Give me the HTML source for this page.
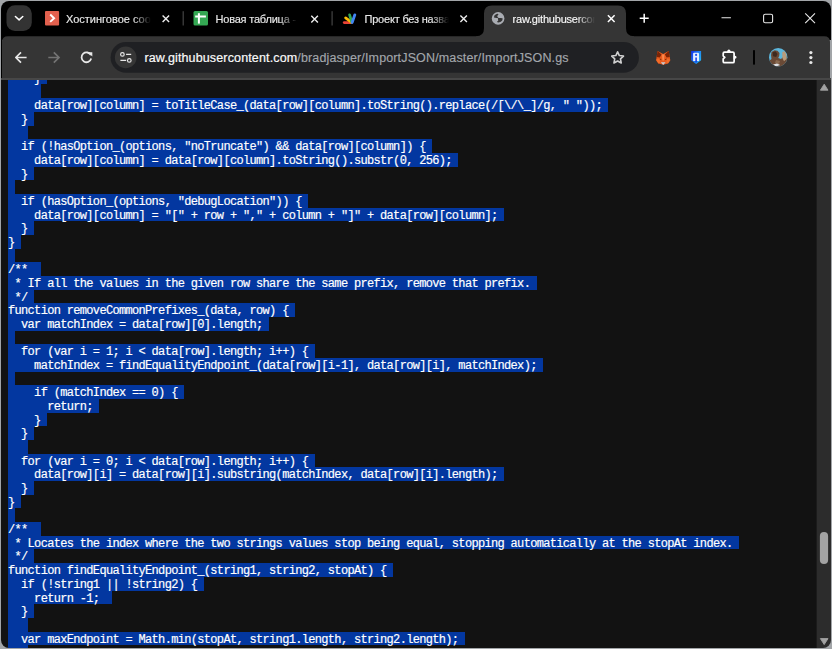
<!DOCTYPE html>
<html><head><meta charset="utf-8">
<style>
html,body{margin:0;padding:0;width:832px;height:649px;overflow:hidden;background:#a2a5a8;}
#win{position:absolute;left:0;top:0;width:832px;height:649px;clip-path:inset(1px 1px 1px 1px round 8px);overflow:hidden;}
.abs{position:absolute;left:0;top:0;}
#content{position:absolute;left:0;top:80px;width:816.6px;height:569px;background:#121212;overflow:hidden;}
#code{position:absolute;left:0;top:-80px;width:832px;height:649px;}
.hl{position:absolute;left:8.0px;height:13.677px;background:#0337a0;}
.ln{position:absolute;left:8.0px;height:13.677px;line-height:13.677px;white-space:pre;font-family:"Liberation Mono",monospace;font-size:12.0px;letter-spacing:-0.6741px;color:#ffffff;-webkit-text-stroke:0.18px #fff;}
.tt{position:absolute;top:11px;height:16px;line-height:16px;font-family:"Liberation Sans",sans-serif;font-size:11px;letter-spacing:-0.2px;white-space:nowrap;overflow:hidden;color:#e8e8e8;-webkit-text-stroke:0.15px #e8e8e8;-webkit-mask-image:linear-gradient(to right,#000 calc(100% - 18px),transparent 100%);}
</style></head><body>
<div id="win">
  <svg class="abs" width="832" height="649">
    <rect x="0" y="0" width="832" height="40" fill="#000"/>
    <rect x="0" y="36" width="2.5" height="44" fill="#000"/>
    <!-- toolbar -->
    <path d="M2 42 Q2 36.2 8 36.2 L824 36.2 Q830 36.2 830 42 L830 78 L2 78 Z" fill="#353535"/>
    <rect x="0" y="78" width="832" height="2" fill="#474747"/>
    <!-- active tab -->
    <path d="M476 36.2 Q484 36.2 484 28.2 L484 13.5 Q484 5.5 492 5.5 L618 5.5 Q626 5.5 626 13.5 L626 28.2 Q626 36.2 634 36.2 L634 40 L476 40 Z" fill="#353535"/>
    <!-- dropdown button -->
    <rect x="6.5" y="5.2" width="25.3" height="25.7" rx="8.5" fill="#333333"/>
    <!-- omnibox -->
    <rect x="110.6" y="42.1" width="528.3" height="30.7" rx="15.35" fill="#1f2023"/>
    <circle cx="125.7" cy="57.4" r="10.8" fill="#363636"/>
  </svg>

  <div id="content"><div id="code">
<div class="hl" style="top:70.800px;width:39.162px"></div>
<div class="hl" style="top:84.477px;width:32.635px"></div>
<div class="hl" style="top:98.154px;width:600.484px"></div>
<div class="hl" style="top:111.831px;width:26.108px"></div>
<div class="hl" style="top:125.508px;width:19.581px"></div>
<div class="hl" style="top:139.185px;width:424.255px"></div>
<div class="hl" style="top:152.862px;width:450.363px"></div>
<div class="hl" style="top:166.539px;width:26.108px"></div>
<div class="hl" style="top:180.216px;width:6.527px"></div>
<div class="hl" style="top:193.893px;width:300.242px"></div>
<div class="hl" style="top:207.570px;width:496.052px"></div>
<div class="hl" style="top:221.247px;width:26.108px"></div>
<div class="hl" style="top:234.924px;width:13.054px"></div>
<div class="hl" style="top:248.601px;width:6.527px"></div>
<div class="hl" style="top:262.278px;width:32.635px"></div>
<div class="hl" style="top:275.955px;width:528.687px"></div>
<div class="hl" style="top:289.632px;width:26.108px"></div>
<div class="hl" style="top:303.309px;width:287.188px"></div>
<div class="hl" style="top:316.986px;width:261.080px"></div>
<div class="hl" style="top:330.663px;width:6.527px"></div>
<div class="hl" style="top:344.340px;width:306.769px"></div>
<div class="hl" style="top:358.017px;width:535.214px"></div>
<div class="hl" style="top:371.694px;width:6.527px"></div>
<div class="hl" style="top:385.371px;width:176.229px"></div>
<div class="hl" style="top:399.048px;width:91.378px"></div>
<div class="hl" style="top:412.725px;width:39.162px"></div>
<div class="hl" style="top:426.402px;width:26.108px"></div>
<div class="hl" style="top:440.079px;width:19.581px"></div>
<div class="hl" style="top:453.756px;width:306.769px"></div>
<div class="hl" style="top:467.433px;width:496.052px"></div>
<div class="hl" style="top:481.110px;width:26.108px"></div>
<div class="hl" style="top:494.787px;width:13.054px"></div>
<div class="hl" style="top:508.464px;width:6.527px"></div>
<div class="hl" style="top:522.141px;width:32.635px"></div>
<div class="hl" style="top:535.818px;width:731.024px"></div>
<div class="hl" style="top:549.495px;width:26.108px"></div>
<div class="hl" style="top:563.172px;width:385.093px"></div>
<div class="hl" style="top:576.849px;width:195.810px"></div>
<div class="hl" style="top:590.526px;width:104.432px"></div>
<div class="hl" style="top:604.203px;width:26.108px"></div>
<div class="hl" style="top:617.880px;width:19.581px"></div>
<div class="hl" style="top:631.557px;width:456.890px"></div>
<div class="hl" style="top:645.234px;width:19.581px"></div>
<div class="ln" style="top:72.800px">    }</div>
<div class="ln" style="top:100.154px">    data[row][column] = toTitleCase_(data[row][column].toString().replace(/[\/\_]/g, &quot; &quot;));</div>
<div class="ln" style="top:113.831px">  }</div>
<div class="ln" style="top:141.185px">  if (!hasOption_(options, &quot;noTruncate&quot;) &amp;&amp; data[row][column]) {</div>
<div class="ln" style="top:154.862px">    data[row][column] = data[row][column].toString().substr(0, 256);</div>
<div class="ln" style="top:168.539px">  }</div>
<div class="ln" style="top:195.893px">  if (hasOption_(options, &quot;debugLocation&quot;)) {</div>
<div class="ln" style="top:209.570px">    data[row][column] = &quot;[&quot; + row + &quot;,&quot; + column + &quot;]&quot; + data[row][column];</div>
<div class="ln" style="top:223.247px">  }</div>
<div class="ln" style="top:236.924px">}</div>
<div class="ln" style="top:264.278px">/** </div>
<div class="ln" style="top:277.955px"> * If all the values in the given row share the same prefix, remove that prefix.</div>
<div class="ln" style="top:291.632px"> */</div>
<div class="ln" style="top:305.309px">function removeCommonPrefixes_(data, row) {</div>
<div class="ln" style="top:318.986px">  var matchIndex = data[row][0].length;</div>
<div class="ln" style="top:346.340px">  for (var i = 1; i &lt; data[row].length; i++) {</div>
<div class="ln" style="top:360.017px">    matchIndex = findEqualityEndpoint_(data[row][i-1], data[row][i], matchIndex);</div>
<div class="ln" style="top:387.371px">    if (matchIndex == 0) {</div>
<div class="ln" style="top:401.048px">      return;</div>
<div class="ln" style="top:414.725px">    }</div>
<div class="ln" style="top:428.402px">  }</div>
<div class="ln" style="top:455.756px">  for (var i = 0; i &lt; data[row].length; i++) {</div>
<div class="ln" style="top:469.433px">    data[row][i] = data[row][i].substring(matchIndex, data[row][i].length);</div>
<div class="ln" style="top:483.110px">  }</div>
<div class="ln" style="top:496.787px">}</div>
<div class="ln" style="top:524.141px">/** </div>
<div class="ln" style="top:537.818px"> * Locates the index where the two strings values stop being equal, stopping automatically at the stopAt index.</div>
<div class="ln" style="top:551.495px"> */</div>
<div class="ln" style="top:565.172px">function findEqualityEndpoint_(string1, string2, stopAt) {</div>
<div class="ln" style="top:578.849px">  if (!string1 || !string2) {</div>
<div class="ln" style="top:592.526px">    return -1; </div>
<div class="ln" style="top:606.203px">  }</div>
<div class="ln" style="top:633.557px">  var maxEndpoint = Math.min(stopAt, string1.length, string2.length);</div>
  </div></div>

  <svg class="abs" width="832" height="649">
    <!-- scrollbar -->
    <rect x="816.6" y="80" width="15" height="569" fill="#2c2c2c"/>
    <path d="M824.2 84.2 L828 90.2 H820.4 Z" fill="#a3a3a3" stroke="#a3a3a3" stroke-width="0.9" stroke-linejoin="round"/>
    <rect x="819.9" y="532" width="8.2" height="32" rx="4.1" fill="#a3a3a3"/>
    <path d="M824.2 644.6 L828 638.6 H820.4 Z" fill="#a3a3a3" stroke="#a3a3a3" stroke-width="0.9" stroke-linejoin="round"/>

    <!-- dropdown chevron -->
    <path d="M15.4 16.5 L19.1 19.9 L22.8 16.5" fill="none" stroke="#fff" stroke-width="1.5" stroke-linecap="round" stroke-linejoin="round"/>
    <!-- tab1 favicon -->
    <rect x="45" y="10.9" width="14.1" height="14.7" rx="1" fill="#e2604e"/>
    <path d="M50.2 14.5 L54.1 18.2 L50.2 21.9" fill="none" stroke="#fff" stroke-width="1.9"/>
    <path d="M162.6 15.5 L169.1 22 M169.1 15.5 L162.6 22" stroke="#ececec" stroke-width="1.4"/>
    <rect x="182.6" y="11.2" width="1.2" height="14.3" fill="#444"/>
    <!-- tab2 favicon -->
    <rect x="193.5" y="11" width="14.5" height="14.4" rx="1.5" fill="#34a853"/>
    <rect x="195.2" y="15.5" width="10.7" height="2" fill="#fff"/>
    <rect x="197.9" y="13.2" width="2" height="10.4" fill="#fff"/>
    <path d="M311.3 15.8 L317.9 22.4 M317.9 15.8 L311.3 22.4" stroke="#ececec" stroke-width="1.4"/>
    <rect x="331.5" y="11.2" width="1.2" height="14.3" fill="#444"/>
    <!-- tab3 apps script favicon -->
    <g stroke-linecap="round" fill="none">
      <path d="M344.2 22.6 L351.3 22.6" stroke="#ea4335" stroke-width="2.7"/>
      <path d="M345.6 17.9 L351.3 22.2" stroke="#fbbc04" stroke-width="2.7"/>
      <path d="M349.6 14.9 L351.8 22" stroke="#34a853" stroke-width="2.7"/>
      <path d="M354.8 14.9 L352.2 22.4" stroke="#4285f4" stroke-width="2.9"/>
    </g>
    <path d="M460.4 15.5 L466.9 22 M466.9 15.5 L460.4 22" stroke="#ececec" stroke-width="1.4"/>
    <!-- globe -->
    <g transform="translate(490,10)">
      <circle cx="8.1" cy="8.4" r="6.3" fill="#a9acb2"/>
      <path d="M3.9 7.6 L4.4 5.6 L5.6 4.4 L7.1 3.7 L8.6 4.1 L7.6 5.5 L7.3 6.8 L8.6 7.9 L6.5 8.0 Z" fill="#353535"/>
      <path d="M7.9 7.9 L11 7.9 L12.8 8.6 L12.2 10.4 L10.8 11.7 L8.6 12.4 L6.8 12.1 L8.3 10.6 L7.9 8.9 Z" fill="#353535"/>
    </g>
    <path d="M607.9 15.3 L614.6 22 M614.6 15.3 L607.9 22" stroke="#fff" stroke-width="1.5"/>
    <!-- new tab + -->
    <path d="M644.2 13.8 V22.8 M639.7 18.3 H648.7" stroke="#fff" stroke-width="1.5"/>
    <!-- window controls -->
    <path d="M721.5 17.7 H730.9" stroke="#e8e8e8" stroke-width="1.1"/>
    <rect x="763.6" y="14.2" width="9" height="8.6" rx="1.6" fill="none" stroke="#e8e8e8" stroke-width="1.1"/>
    <path d="M805.2 13.4 L815 23.2 M815 13.4 L805.2 23.2" stroke="#e8e8e8" stroke-width="1.1"/>

    <!-- back -->
    <path d="M26.6 57.5 H15.8 M21 52.3 L15.8 57.5 L21 62.7" fill="none" stroke="#e8e8e8" stroke-width="1.7" stroke-linejoin="round"/>
    <!-- forward -->
    <path d="M48.3 57.5 H59 M53.8 52.3 L59 57.5 L53.8 62.7" fill="none" stroke="#737373" stroke-width="1.7"/>
    <!-- reload -->
    <path d="M90.9 55.2 A4.9 4.9 0 1 0 91.2 58.6" fill="none" stroke="#e8e8e8" stroke-width="1.8"/>
    <path d="M87.9 52.2 H92.3 V56.6 Z" fill="#e8e8e8"/>
    <!-- tune -->
    <circle cx="122.4" cy="54.4" r="1.8" fill="none" stroke="#e8e8e8" stroke-width="1.2"/>
    <path d="M126.1 54.4 H131.2 M120.4 60.4 H126.2" stroke="#e8e8e8" stroke-width="1.3"/>
    <circle cx="129.3" cy="60.4" r="1.8" fill="none" stroke="#e8e8e8" stroke-width="1.2"/>
    <!-- star -->
    <path d="M617.60 51.80 L619.36 55.57 L623.50 56.08 L620.45 58.93 L621.24 63.02 L617.60 61.00 L613.96 63.02 L614.75 58.93 L611.70 56.08 L615.84 55.57 Z" fill="none" stroke="#cfcfcf" stroke-width="1.6" stroke-linejoin="round"/>
    <!-- fox -->
    <g transform="translate(653,48)">
      <path d="M4.6 3.1 L10.2 6 L15.7 3.1 L16.8 9 L17.3 12.5 L15 15.5 L10.2 16.8 L5.4 15.5 L3.1 12.5 L3.6 9 Z" fill="#ea5b1d"/>
      <path d="M4.6 3.1 L8.5 6.6 L6.8 9.4 L3.6 9 Z M15.7 3.1 L11.9 6.6 L13.6 9.4 L16.8 9 Z" fill="#7a2406"/>
      <path d="M9 6.4 L11.4 6.4 L11 12.5 L9.4 12.5 Z" fill="#fb8a4e"/>
      <path d="M3.2 11.5 L6.5 10.5 L7 14.5 L5.4 15.5 Z M17.2 11.5 L13.9 10.5 L13.4 14.5 L15 15.5 Z" fill="#f26d2a"/>
      <path d="M7.8 14.2 L12.6 14.2 L10.2 16.9 Z" fill="#c9cacf"/>
      <path d="M6.8 11 L8.3 11.6 M13.6 11 L12.1 11.6" stroke="#7a2a08" stroke-width="1"/>
    </g>
    <!-- ronin -->
    <g transform="translate(686,48)">
      <defs><linearGradient id="rg" x1="0" y1="0" x2="1" y2="0.6"><stop offset="0" stop-color="#1230ea"/><stop offset="1" stop-color="#25b0f5"/></linearGradient></defs>
      <path d="M5.1 3.1 H15.1 V12.2 L10.1 16 L5.1 12.2 Z" fill="url(#rg)"/>
      <path d="M8.2 4.8 H11.9 Q13 4.8 13 5.9 V10.6 L13 13 H7.1 V5.9 Q7.1 4.8 8.2 4.8 Z" fill="#e4eeff"/>
      <circle cx="10.1" cy="6.9" r="1.1" fill="#1a55f0"/>
      <rect x="9.35" y="9.5" width="1.5" height="4.9" fill="#1238e8"/>
    </g>
    <!-- puzzle -->
    <g transform="translate(719,46)">
      <path d="M5.5 6.1 H13.8 Q15.1 6.1 15.1 7.4 V15.4 Q15.1 16.7 13.8 16.7 H5.5 Q4.2 16.7 4.2 15.4 V12.9 L5.8 11.4 L4.2 9.9 V7.4 Q4.2 6.1 5.5 6.1 Z" fill="none" stroke="#fff" stroke-width="1.75" stroke-linejoin="round"/>
      <path d="M8 6.5 C8 2.6 11.8 2.6 11.8 6.5 Z" fill="#fff"/>
      <path d="M14.7 9.6 C18.4 9.6 18.4 13.1 14.7 13.1 Z" fill="#fff"/>
    </g>
    <!-- toolbar separator -->
    <rect x="753" y="50.2" width="2" height="14.4" fill="#000"/>
    <!-- avatar -->
    <defs><clipPath id="av"><circle cx="778.2" cy="57.2" r="9.2"/></clipPath></defs>
    <g clip-path="url(#av)">
      <rect x="768" y="47" width="21" height="21" fill="#5cb6dc"/>
      <g transform="translate(767,46)">
        <path d="M4.5 6 L7.5 4.3 L10.5 4.8 L12.5 7 L12.2 10 L11.2 12 L14 13 L16 11 L16.8 7 L19 9 L20 14 L20 22 L2 22 L2 15 L4.5 13 L4 9 Z" fill="#6a4a36"/>
        <path d="M5.5 6.5 L8.5 5.3 L10.5 8 L9.2 11 L6 10.2 Z" fill="#3e2a1f"/>
        <path d="M15.3 6 L17.5 5.3 L19.2 8 L19.6 13 L17 15.2 L15.4 12 Z" fill="#b89b7b"/>
        <path d="M9 14 L13 15 L12 18 L8 17 Z" fill="#8a6a50"/>
        <path d="M6 18.6 L10 17.6 L13.2 19 L9 20.6 Z" fill="#dfe3e8"/>
      </g>
    </g>
    <!-- kebab -->
    <circle cx="810.9" cy="52.6" r="1.6" fill="#e8e8e8"/>
    <circle cx="810.9" cy="57.6" r="1.6" fill="#e8e8e8"/>
    <circle cx="810.9" cy="62.5" r="1.6" fill="#e8e8e8"/>
  </svg>

  <div class="tt" style="left:66px;width:85px;letter-spacing:0px;">Хостинговое сообщество</div>
  <div class="tt" style="left:215.5px;width:81px;">Новая таблица - Google Таблицы</div>
  <div class="tt" style="left:364.5px;width:84px;">Проект без названия</div>
  <div class="tt" style="left:512.5px;width:82px;color:#fff;">raw.githubusercontent.com/bradjasper/ImportJSON/master/ImportJSON.gs</div>
  <div style="position:absolute;left:144.4px;top:49px;height:18px;line-height:18px;font-family:'Liberation Sans',sans-serif;font-size:12.5px;letter-spacing:0.14px;white-space:pre;color:#fafafa;-webkit-text-stroke:0.2px #fafafa;">raw.githubusercontent.com<span style="color:#a3a7ac;-webkit-text-stroke:0.15px #a3a7ac;">/bradjasper/ImportJSON/master/ImportJSON.gs</span></div>
</div>
</body></html>
